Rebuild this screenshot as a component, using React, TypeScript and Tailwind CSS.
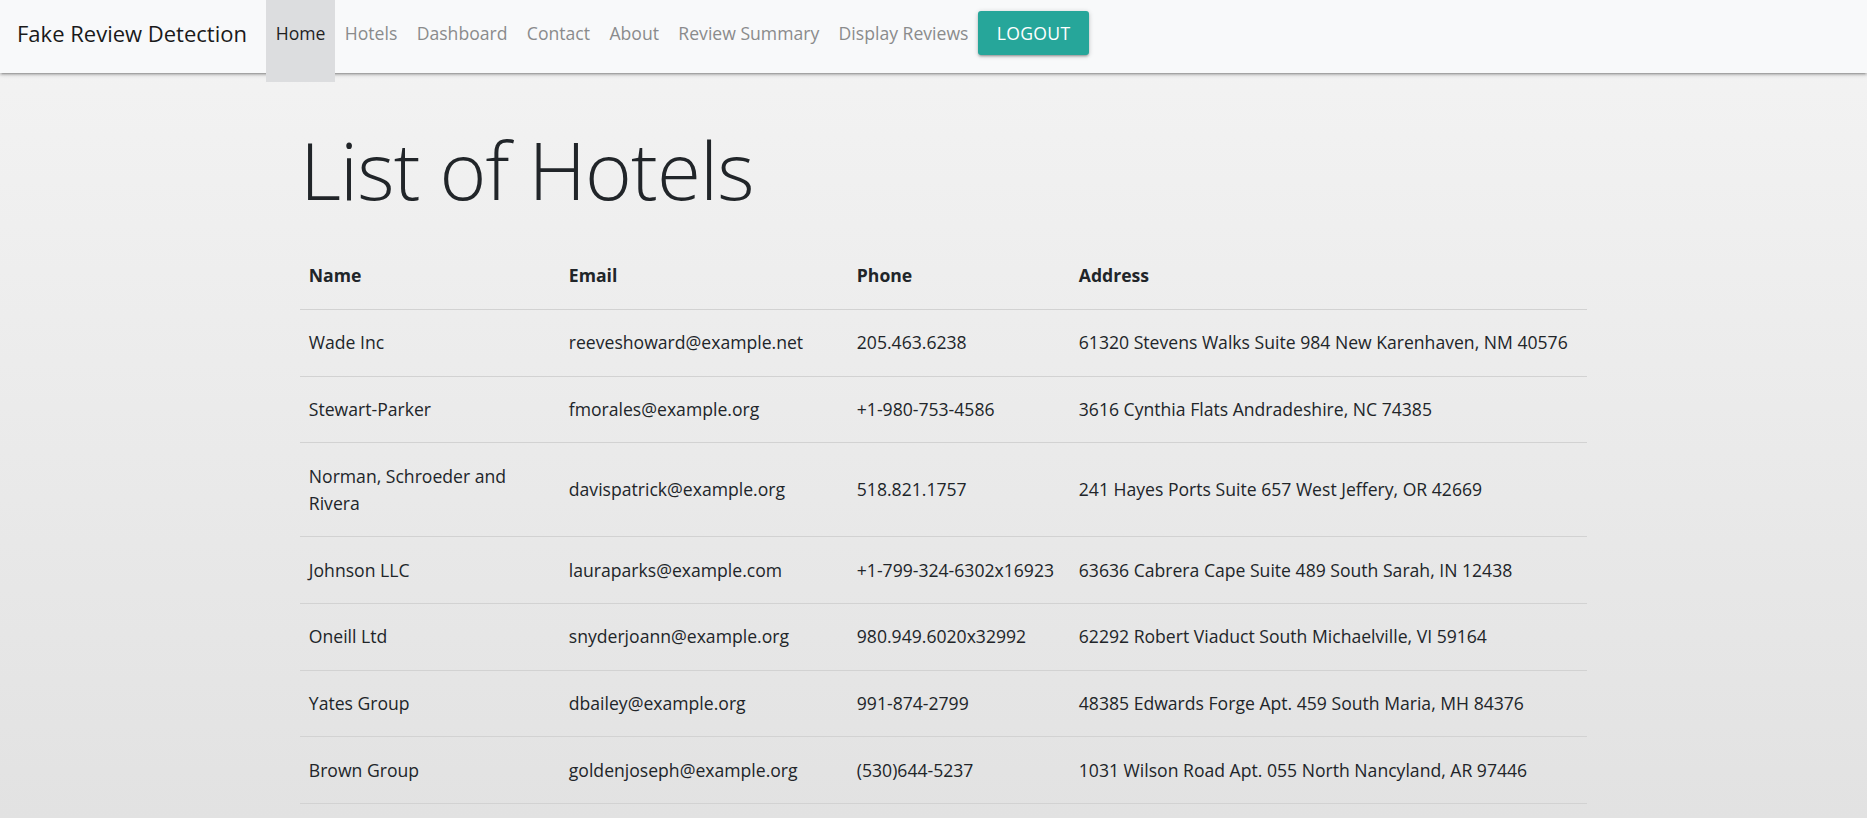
import React from "react";

type Hotel = {
  name: string;
  email: string;
  phone: string;
  address: string;
};

const hotels: Hotel[] = [
  { name: "Wade Inc", email: "reeveshoward@example.net", phone: "205.463.6238", address: "61320 Stevens Walks Suite 984 New Karenhaven, NM 40576" },
  { name: "Stewart-Parker", email: "fmorales@example.org", phone: "+1-980-753-4586", address: "3616 Cynthia Flats Andradeshire, NC 74385" },
  { name: "Norman, Schroeder and Rivera", email: "davispatrick@example.org", phone: "518.821.1757", address: "241 Hayes Ports Suite 657 West Jeffery, OR 42669" },
  { name: "Johnson LLC", email: "lauraparks@example.com", phone: "+1-799-324-6302x16923", address: "63636 Cabrera Cape Suite 489 South Sarah, IN 12438" },
  { name: "Oneill Ltd", email: "snyderjoann@example.org", phone: "980.949.6020x32992", address: "62292 Robert Viaduct South Michaelville, VI 59164" },
  { name: "Yates Group", email: "dbailey@example.org", phone: "991-874-2799", address: "48385 Edwards Forge Apt. 459 South Maria, MH 84376" },
  { name: "Brown Group", email: "goldenjoseph@example.org", phone: "(530)644-5237", address: "1031 Wilson Road Apt. 055 North Nancyland, AR 97446" },
];

const links = ["Hotels", "Dashboard", "Contact", "About", "Review Summary", "Display Reviews"];

const Navbar = () => (
  <nav className="relative z-10 h-[73px] bg-[#f8f9fa] shadow-[0_2px_2px_0_rgba(0,0,0,0.14),0_3px_1px_-2px_rgba(0,0,0,0.12),0_1px_5px_0_rgba(0,0,0,0.2)]">
    <div className="flex items-start pl-[17px]">
      <a className="mr-[19px] pt-[18px] text-[22px] leading-[30px] text-[#1a1a1a]">
        Fake Review Detection
      </a>
      <a className="h-[82px] bg-[#dcdddf] px-[9.7px] pt-[20px] text-[17.6px] leading-[27px] text-[#1f1f1f]">
        Home
      </a>
      {links.map((l) => (
        <a key={l} className="px-[9.7px] pt-[20px] text-[17.6px] leading-[27px] text-[#8a8b8c]">
          {l}
        </a>
      ))}
      <button className="mt-[11px] h-[44px] w-[111px] rounded-[3px] bg-[#26a69a] text-[17.6px] tracking-[0.3px] text-white shadow-[0_2px_2px_0_rgba(0,0,0,0.14),0_3px_1px_-2px_rgba(0,0,0,0.12),0_1px_5px_0_rgba(0,0,0,0.2)]">
        LOGOUT
      </button>
    </div>
  </nav>
);

const App = () => {
  return (
    <div
      className="min-h-screen bg-gradient-to-b from-[#f4f4f4] to-[#e2e2e2] text-[#212529]"
      style={{ fontFamily: "'Open Sans', 'Noto Sans', sans-serif" }}
    >
      <Navbar />
      <div className="pl-[300px]">
        <div className="w-[1287px]">
          <h1 className="mt-[48px] mb-[26px] text-[80px] font-light leading-[96px] tracking-[-0.9px] text-[#212529]">
            List of Hotels
          </h1>
          <table className="w-full table-fixed border-collapse text-[17.6px] leading-[27px]">
            <colgroup>
              <col className="w-[260px]" />
              <col className="w-[288px]" />
              <col className="w-[222px]" />
              <col />
            </colgroup>
            <thead>
              <tr className="border-b border-[#d2d2d2]">
                <th className="px-[8.8px] py-[19.4px] text-left font-bold">Name</th>
                <th className="px-[8.8px] py-[19.4px] text-left font-bold">Email</th>
                <th className="px-[8.8px] py-[19.4px] text-left font-bold">Phone</th>
                <th className="px-[8.8px] py-[19.4px] text-left font-bold">Address</th>
              </tr>
            </thead>
            <tbody>
              {hotels.map((h) => (
                <tr key={h.email} className="border-b border-[#d2d2d2]">
                  <td className="px-[8.8px] py-[19.4px] align-middle">{h.name}</td>
                  <td className="px-[8.8px] py-[19.4px] align-middle whitespace-nowrap">{h.email}</td>
                  <td className="px-[8.8px] py-[19.4px] align-middle whitespace-nowrap">{h.phone}</td>
                  <td className="px-[8.8px] py-[19.4px] align-middle whitespace-nowrap">{h.address}</td>
                </tr>
              ))}
            </tbody>
          </table>
        </div>
      </div>
    </div>
  );
};

export default App;
